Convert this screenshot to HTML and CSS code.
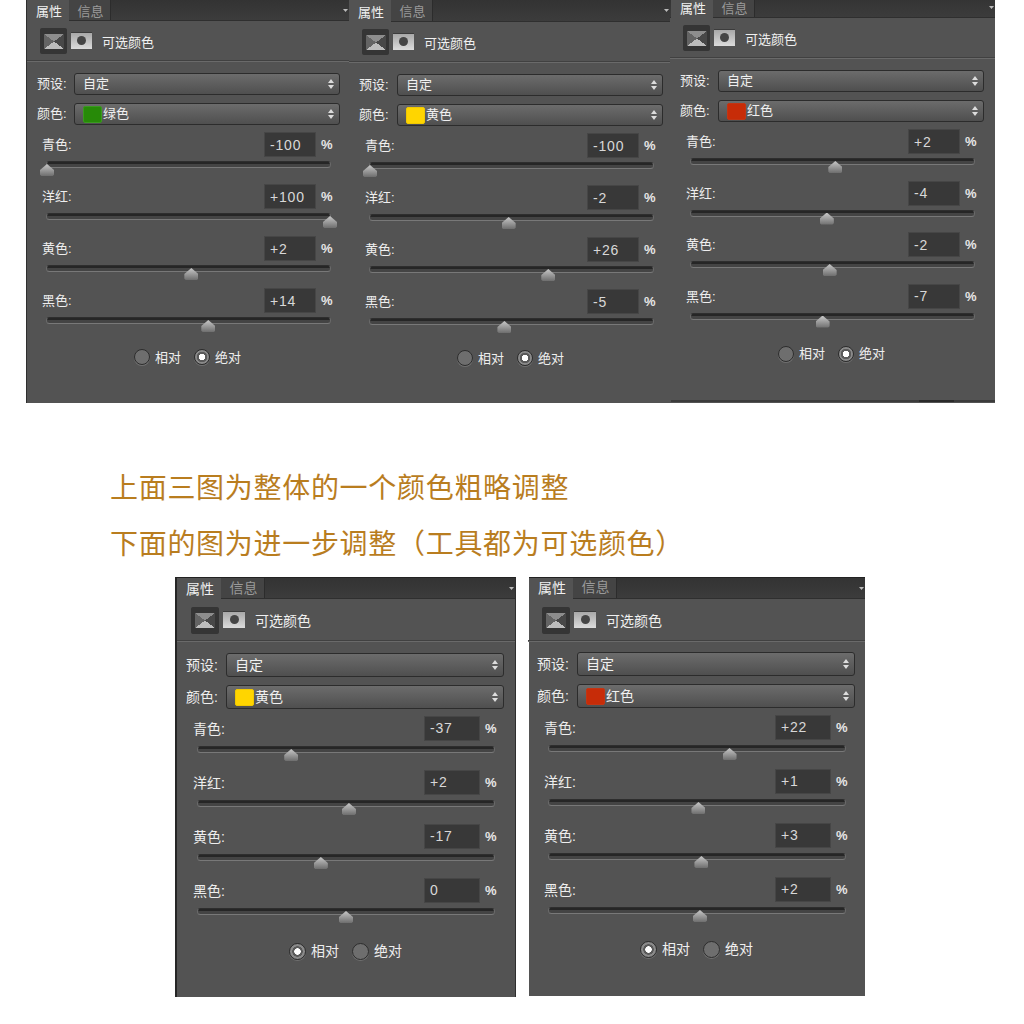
FILE: index.html
```html
<!DOCTYPE html>
<html lang="zh-CN">
<head>
    <meta charset="UTF-8">
    <meta name="viewport" content="width=device-width, initial-scale=1.0">
    <title>可选颜色</title>
    <link rel="stylesheet" href="styles.css">
</head>
<body>
    <div class="row-top">
        <!-- 绿色 -->
        <div class="panel panel-a">
            <div class="tabs"><div class="tab active">属性</div><div class="tab">信息</div></div>
            <div class="inner">
                <div class="head"><div class="icon-box"><div class="icon-adj"></div></div><div class="icon-mask"></div><div class="title">可选颜色</div></div>
                <div class="field"><div class="field-label">预设:</div><div class="select">自定</div></div>
                <div class="field"><div class="field-label">颜色:</div><div class="select"><span class="swatch green"></span>绿色</div></div>
                <div class="adjust">
                    <div class="adjust-top"><div class="adjust-label">青色:</div><div class="value">-100</div><div class="pct">%</div></div>
                    <div class="track"><div class="thumb" style="left:0%"></div></div>
                </div>
                <div class="adjust">
                    <div class="adjust-top"><div class="adjust-label">洋红:</div><div class="value">+100</div><div class="pct">%</div></div>
                    <div class="track"><div class="thumb" style="left:100%"></div></div>
                </div>
                <div class="adjust">
                    <div class="adjust-top"><div class="adjust-label">黄色:</div><div class="value">+2</div><div class="pct">%</div></div>
                    <div class="track"><div class="thumb" style="left:51%"></div></div>
                </div>
                <div class="adjust">
                    <div class="adjust-top"><div class="adjust-label">黑色:</div><div class="value">+14</div><div class="pct">%</div></div>
                    <div class="track"><div class="thumb" style="left:57%"></div></div>
                </div>
                <div class="radios">
                    <div class="radio"></div><div class="radio-label">相对</div>
                    <div class="radio on"></div><div class="radio-label">绝对</div>
                </div>
            </div>
        </div>

        <!-- 黄色 -->
        <div class="panel panel-b">
            <div class="tabs"><div class="tab active">属性</div><div class="tab">信息</div></div>
            <div class="inner">
                <div class="head"><div class="icon-box"><div class="icon-adj"></div></div><div class="icon-mask"></div><div class="title">可选颜色</div></div>
                <div class="field"><div class="field-label">预设:</div><div class="select">自定</div></div>
                <div class="field"><div class="field-label">颜色:</div><div class="select"><span class="swatch yellow"></span>黄色</div></div>
                <div class="adjust">
                    <div class="adjust-top"><div class="adjust-label">青色:</div><div class="value">-100</div><div class="pct">%</div></div>
                    <div class="track"><div class="thumb" style="left:0%"></div></div>
                </div>
                <div class="adjust">
                    <div class="adjust-top"><div class="adjust-label">洋红:</div><div class="value">-2</div><div class="pct">%</div></div>
                    <div class="track"><div class="thumb" style="left:49%"></div></div>
                </div>
                <div class="adjust">
                    <div class="adjust-top"><div class="adjust-label">黄色:</div><div class="value">+26</div><div class="pct">%</div></div>
                    <div class="track"><div class="thumb" style="left:63%"></div></div>
                </div>
                <div class="adjust">
                    <div class="adjust-top"><div class="adjust-label">黑色:</div><div class="value">-5</div><div class="pct">%</div></div>
                    <div class="track"><div class="thumb" style="left:47.5%"></div></div>
                </div>
                <div class="radios">
                    <div class="radio"></div><div class="radio-label">相对</div>
                    <div class="radio on"></div><div class="radio-label">绝对</div>
                </div>
            </div>
        </div>

        <!-- 红色 -->
        <div class="panel panel-c">
            <div class="tabs"><div class="tab active">属性</div><div class="tab">信息</div></div>
            <div class="inner">
                <div class="head"><div class="icon-box"><div class="icon-adj"></div></div><div class="icon-mask"></div><div class="title">可选颜色</div></div>
                <div class="field"><div class="field-label">预设:</div><div class="select">自定</div></div>
                <div class="field"><div class="field-label">颜色:</div><div class="select"><span class="swatch red"></span>红色</div></div>
                <div class="adjust">
                    <div class="adjust-top"><div class="adjust-label">青色:</div><div class="value">+2</div><div class="pct">%</div></div>
                    <div class="track"><div class="thumb" style="left:51%"></div></div>
                </div>
                <div class="adjust">
                    <div class="adjust-top"><div class="adjust-label">洋红:</div><div class="value">-4</div><div class="pct">%</div></div>
                    <div class="track"><div class="thumb" style="left:48%"></div></div>
                </div>
                <div class="adjust">
                    <div class="adjust-top"><div class="adjust-label">黄色:</div><div class="value">-2</div><div class="pct">%</div></div>
                    <div class="track"><div class="thumb" style="left:49%"></div></div>
                </div>
                <div class="adjust">
                    <div class="adjust-top"><div class="adjust-label">黑色:</div><div class="value">-7</div><div class="pct">%</div></div>
                    <div class="track"><div class="thumb" style="left:46.5%"></div></div>
                </div>
                <div class="radios">
                    <div class="radio"></div><div class="radio-label">相对</div>
                    <div class="radio on"></div><div class="radio-label">绝对</div>
                </div>
            </div>
        </div>
    </div>

    <div class="notes">
        <p class="note">上面三图为整体的一个颜色粗略调整</p>
        <p class="note">下面的图为进一步调整（工具都为可选颜色）</p>
    </div>

    <div class="row-bottom">
        <!-- 黄色 -->
        <div class="panel panel-lg panel-d">
            <div class="tabs"><div class="tab active">属性</div><div class="tab">信息</div></div>
            <div class="inner">
                <div class="head"><div class="icon-box"><div class="icon-adj"></div></div><div class="icon-mask"></div><div class="title">可选颜色</div></div>
                <div class="field"><div class="field-label">预设:</div><div class="select">自定</div></div>
                <div class="field"><div class="field-label">颜色:</div><div class="select"><span class="swatch yellow"></span>黄色</div></div>
                <div class="adjust">
                    <div class="adjust-top"><div class="adjust-label">青色:</div><div class="value">-37</div><div class="pct">%</div></div>
                    <div class="track"><div class="thumb" style="left:31.5%"></div></div>
                </div>
                <div class="adjust">
                    <div class="adjust-top"><div class="adjust-label">洋红:</div><div class="value">+2</div><div class="pct">%</div></div>
                    <div class="track"><div class="thumb" style="left:51%"></div></div>
                </div>
                <div class="adjust">
                    <div class="adjust-top"><div class="adjust-label">黄色:</div><div class="value">-17</div><div class="pct">%</div></div>
                    <div class="track"><div class="thumb" style="left:41.5%"></div></div>
                </div>
                <div class="adjust">
                    <div class="adjust-top"><div class="adjust-label">黑色:</div><div class="value">0</div><div class="pct">%</div></div>
                    <div class="track"><div class="thumb" style="left:50%"></div></div>
                </div>
                <div class="radios">
                    <div class="radio on"></div><div class="radio-label">相对</div>
                    <div class="radio"></div><div class="radio-label">绝对</div>
                </div>
            </div>
        </div>

        <!-- 红色 -->
        <div class="panel panel-lg panel-e">
            <div class="tabs"><div class="tab active">属性</div><div class="tab">信息</div></div>
            <div class="inner">
                <div class="head"><div class="icon-box"><div class="icon-adj"></div></div><div class="icon-mask"></div><div class="title">可选颜色</div></div>
                <div class="field"><div class="field-label">预设:</div><div class="select">自定</div></div>
                <div class="field"><div class="field-label">颜色:</div><div class="select"><span class="swatch red"></span>红色</div></div>
                <div class="adjust">
                    <div class="adjust-top"><div class="adjust-label">青色:</div><div class="value">+22</div><div class="pct">%</div></div>
                    <div class="track"><div class="thumb" style="left:61%"></div></div>
                </div>
                <div class="adjust">
                    <div class="adjust-top"><div class="adjust-label">洋红:</div><div class="value">+1</div><div class="pct">%</div></div>
                    <div class="track"><div class="thumb" style="left:50.5%"></div></div>
                </div>
                <div class="adjust">
                    <div class="adjust-top"><div class="adjust-label">黄色:</div><div class="value">+3</div><div class="pct">%</div></div>
                    <div class="track"><div class="thumb" style="left:51.5%"></div></div>
                </div>
                <div class="adjust">
                    <div class="adjust-top"><div class="adjust-label">黑色:</div><div class="value">+2</div><div class="pct">%</div></div>
                    <div class="track"><div class="thumb" style="left:51%"></div></div>
                </div>
                <div class="radios">
                    <div class="radio on"></div><div class="radio-label">相对</div>
                    <div class="radio"></div><div class="radio-label">绝对</div>
                </div>
            </div>
        </div>
    </div>
</body>
</html>
```

FILE: styles.css
```css
body {
    margin: 0;
    background: white;
    font-family: "Liberation Sans", "Noto Sans CJK SC", sans-serif;
    color: #eeeeee;
}

.row-top {
    display: flex;
    height: 403px;
    padding-left: 26px;
    overflow: hidden;
}

.row-bottom {
    display: flex;
    gap: 13px;
    margin-top: 4px;
    padding-left: 175px;
}

.notes {
    margin-top: 58px;
    padding-left: 110px;
}

.note {
    margin: 0;
    height: 56px;
    line-height: 56px;
    font-size: 28px;
    letter-spacing: 0.7px;
    text-spacing-trim: space-all;
    color: #b97d1f;
}

/* panel sizes, the lower two are a bit bigger */
.panel {
    --text: 13px;
    --tabs-h: 21px;
    --tab-w: 42px;
    --head-h: 41px;
    --box-w: 27px;
    --box-h: 26px;
    --mask-w: 21px;
    --mask-h: 17px;
    --field-h: 22px;
    --label-w: 37px;
    --select-w: 266px;
    --value-w: 52px;
    --track-w: 285px;
    --adjust-gap: 16px;
    --radio: 16px;
    --radio-top: 23px;
    --radio-pad: 107px;
    --adjust-pad: 15px;
    position: relative;
    background: #535353;
    font-size: var(--text);
    flex-shrink: 0;
}

.panel-lg {
    --text: 14px;
    --head-h: 43px;
    --box-w: 28px;
    --box-h: 27px;
    --mask-w: 22px;
    --field-h: 24px;
    --tab-w: 44px;
    --label-w: 40px;
    --select-w: 278px;
    --value-w: 56px;
    --track-w: 298px;
    --adjust-gap: 17px;
    --radio: 17px;
    --radio-top: 26px;
    --radio-pad: 112px;
    --adjust-pad: 16px;
}

.panel-a {
    width: 322px;
    height: 403px;
    border-left: 1px solid #2e2e2e;
}

.panel-b {
    --label-w: 38px;
    --adjust-pad: 16px;
    --radio-pad: 108px;
    width: 321px;
    height: 403px;
}

.panel-b .tabs {
    height: 22px;
}

.panel-c {
    --label-w: 38px;
    --adjust-pad: 16px;
    --radio-pad: 108px;
    --adjust-gap: 15.5px;
    --radio-top: 24px;
    width: 325px;
    height: 406px;
    margin-top: -3px;
}

.panel-c .tab:first-child {
    margin-left: 1px;
}

/* dark edge along the bottom of the third panel */
.panel-c::after {
    content: "";
    position: absolute;
    left: 1px;
    right: 0;
    bottom: 1px;
    height: 2px;
    background: linear-gradient(to right, #3b3b3b 0 248px, #2a2a2a 248px 283px, #3b3b3b 283px);
}

.panel-d {
    width: 338px;
    height: 419px;
    border-left: 2px solid #262626;
    border-right: 1px solid #2e2e2e;
    border-top: 1px solid #222;
}

.panel-e {
    --radio-top: 25px;
    width: 336px;
    height: 418px;
    border-top: 1px solid #222;
}

.panel-e .inner {
    margin-left: -1px;
}

.panel-e .head {
    margin-bottom: 10px;
}

.tabs {
    position: relative;
    display: flex;
    height: var(--tabs-h);
    background: linear-gradient(#333, #3c3c3c);
    border-bottom: 1px solid #2f2f2f;
    box-sizing: border-box;
}

/* menu arrow at the end of the tab bar */
.tabs::after {
    content: "";
    position: absolute;
    right: 1px;
    top: 9px;
    width: 5px;
    height: 3px;
    background: #bbb;
    clip-path: polygon(0 0, 100% 0, 50% 100%);
}

.tab {
    display: flex;
    align-items: center;
    justify-content: center;
    width: var(--tab-w);
    height: 100%;
    padding-left: 2px;
    background: #444;
    border-right: 1px solid #2c2c2c;
    box-sizing: border-box;
    color: #9a9a9a;
}

.panel-lg .tab {
    padding-bottom: 2px;
}

.panel-e .tab {
    padding-bottom: 4px;
}

.tab.active {
    background: #535353;
    border-right: 0;
    color: #f0f0f0;
    height: calc(100% + 1px);
}

.head {
    display: flex;
    align-items: center;
    height: var(--head-h);
    padding-left: 13px;
    border-bottom: 1px solid #6a6a6a;
    box-shadow: inset 0 -1px 0 #414141;
    box-sizing: border-box;
    margin-bottom: 11px;
}

.panel-lg .head {
    padding-left: 14px;
}

.icon-box {
    display: flex;
    align-items: center;
    justify-content: center;
    width: var(--box-w);
    height: var(--box-h);
    background: #353535;
    border-radius: 2px;
}

.icon-adj {
    width: 20px;
    height: 15px;
    background: conic-gradient(from -53deg, #8d8d8d 0 106deg, #484848 0 180deg, #bdbdbd 0 286deg, #646464 0);
}

.icon-mask {
    display: flex;
    align-items: center;
    justify-content: center;
    width: var(--mask-w);
    height: var(--mask-h);
    margin-left: 4px;
    margin-top: -1px;
    background: linear-gradient(#a8a8a8, #dcdcdc);
    border-top: 1px solid #3c3c3c;
    box-sizing: border-box;
}

.icon-mask::after {
    content: "";
    width: 9px;
    height: 9px;
    margin-top: -2px;
    border-radius: 50%;
    background: #454545;
}

.title {
    margin-left: 10px;
    color: #f0f0f0;
}

.field {
    display: flex;
    align-items: center;
    height: var(--field-h);
    margin-bottom: 8px;
    padding-left: 10px;
}

.panel-lg .field {
    padding-left: 9px;
}

.field-label {
    width: var(--label-w);
    margin-top: -3px;
}

.select {
    position: relative;
    display: flex;
    align-items: center;
    width: var(--select-w);
    height: var(--field-h);
    padding-left: 8px;
    padding-bottom: 3px;
    background: linear-gradient(#6c6c6c, #4f4f4f);
    border: 1px solid #2c2c2c;
    border-radius: 3px;
    box-sizing: border-box;
    color: #f0f0f0;
}

/* up and down arrows of the dropdown */
.select::after {
    content: "";
    position: absolute;
    right: 5px;
    top: 50%;
    width: 6px;
    height: 10px;
    margin-top: -5px;
    background: #ddd;
    clip-path: polygon(0 40%, 50% 0, 100% 40%, 0 40%, 0 60%, 100% 60%, 50% 100%, 0 60%);
}

.swatch {
    width: 19px;
    height: 17px;
    margin-right: 1px;
    margin-bottom: -3px;
    border-radius: 2px;
    box-sizing: border-box;
}

.green {
    background: #278a08;
    border: 1px solid #3a9a20;
}

.yellow {
    background: #ffd500;
    border: 1px solid #f0c800;
}

.red {
    background: #c72c08;
    border: 1px solid #c23514;
}

.adjust {
    width: calc(var(--track-w) + 5px);
    margin-left: var(--adjust-pad);
    margin-bottom: var(--adjust-gap);
}

.field + .adjust {
    margin-top: -1px;
}

.adjust-top {
    display: flex;
    align-items: center;
    height: 25px;
}

.adjust-label {
    flex: 1;
    margin-top: -2px;
}

.value {
    display: flex;
    align-items: center;
    width: var(--value-w);
    height: 25px;
    padding-left: 5px;
    background: #383838;
    border: 1px solid #464646;
    box-sizing: border-box;
    font-size: 14px;
    letter-spacing: 0.8px;
    color: #d8d8d8;
}

.panel-lg .value {
    padding-bottom: 1px;
}

.pct {
    width: 11px;
    margin-left: 5px;
    font-size: 13px;
    font-weight: bold;
    color: #e6e6e6;
}

.track {
    position: relative;
    width: var(--track-w);
    height: 7px;
    margin-top: 4px;
    margin-left: 4px;
    background: linear-gradient(#262626 0 2px, #444 2px);
    border: 1px solid #2e2e2e;
    border-left-color: #6a6a6a;
    border-right-color: #6a6a6a;
    border-bottom-color: #787878;
    border-radius: 4px;
    box-sizing: border-box;
}

.panel-lg .track {
    margin-top: 5px;
}

.thumb {
    position: absolute;
    top: 2px;
    width: 14px;
    height: 12px;
    margin-left: -7px;
    background: linear-gradient(#c8c8c8, #6e6e6e);
    clip-path: polygon(50% 0, 100% 50%, 100% 90%, 90% 100%, 10% 100%, 0 90%, 0 50%);
}

.radios {
    display: flex;
    align-items: center;
    height: 20px;
    margin-top: var(--radio-top);
    padding-left: var(--radio-pad);
}

.radio {
    width: var(--radio);
    height: var(--radio);
    border-radius: 50%;
    background: #6e6e6e;
    border: 1px solid #2c2c2c;
    box-shadow: 0 1px 0 #707070;
    box-sizing: border-box;
}

.radio.on {
    background: radial-gradient(circle, #fff 0 3px, #5a5a5a 3.5px 5px, #8a8a8a 5.5px);
}

.radio-label {
    margin-left: 5px;
    margin-right: 13px;
    padding-bottom: 2px;
}
```
